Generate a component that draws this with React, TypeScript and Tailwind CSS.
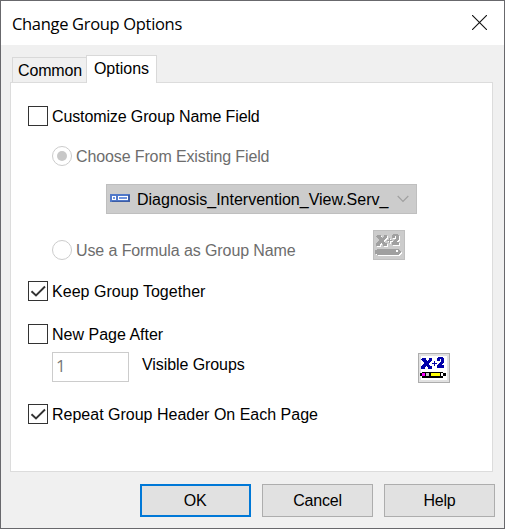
import type { ReactNode } from "react";

function CheckRow({ label, checked, className, textClass }: { label: string; checked?: boolean; className: string; textClass: string }) {
  return (
    <label className={`flex h-5 items-center ${className}`}>
      <span className="flex size-5 shrink-0 items-center justify-center border border-[#333333] bg-white">
        {checked && (
          <svg width="18" height="18" viewBox="0 0 18 18" fill="none" stroke="#333" strokeWidth="1.9">
            <path d="M2.5 9.2 7 13.5 16 4.5" />
          </svg>
        )}
      </span>
      <span className={`ml-1 pt-0.5 whitespace-nowrap ${textClass}`}>{label}</span>
    </label>
  );
}

function RadioRow({ label, selected, textClass }: { label: string; selected?: boolean; textClass: string }) {
  return (
    <label className="flex h-5 items-center text-[#6d6d6d]">
      <span className="flex size-5 shrink-0 items-center justify-center rounded-full border border-[#cccccc]">
        {selected && <span className="size-2.5 rounded-full bg-[#c8c8c8]" />}
      </span>
      <span className={`ml-1 pt-0.5 whitespace-nowrap ${textClass}`}>{label}</span>
    </label>
  );
}

function Glyphs() {
  return (
    <>
      <path d="M4 5h4v2h1v1h1v-1h1v-2h3v3h-1v1h-1v1h-1v2h1v1h2v3h-4v-2h-1v-1h-1v1h-1v2h-4v-3h1v-1h1v-1h1v-2h-1v-1h-1v-1h-1z" />
      <path d="M16 8h1v2h2v1h-2v2h-1v-2h-2v-1h2z" />
      <path d="M20 4h5v1h1v5h-1v1h-1v1h2v3h-7v-3h1v-1h1v-1h1v-1h1v-3h-1v2h-3v-3h1z" />
    </>
  );
}

function FormulaIcon({ disabled }: { disabled?: boolean }) {
  if (disabled) {
    const pencil = "M4 19h22v1h1v1h1v2h-1v1h-1v1h-22v-1h-2v-4h2z";
    return (
      <svg width="30" height="28" viewBox="1 1 30 28" shapeRendering="crispEdges">
        <g fill="#fff" transform="translate(1 1)"><Glyphs /><path d={pencil} /></g>
        <g fill="#a0a0a0"><Glyphs /><path d={pencil} /></g>
        <path d="M23 20h2v2h-2z" fill="#fff" />
      </svg>
    );
  }
  return (
    <svg width="30" height="28" viewBox="1 1 30 28" shapeRendering="crispEdges">
      <path d="M3 3h26v24h-26z" fill="#fff" />
      <g fill="#0000aa"><Glyphs /></g>
      <path d="M4 19h21v1h3v3h-3v2h-21v-2h-2v-3h2z" fill="#000" />
      <path d="M4 20h3v3h-3z" fill="#ff00ff" />
      <path d="M8 20h3v3h-3z" fill="#c8c8c8" />
      <path d="M13 20h9v3h-9z" fill="#ffff00" />
      <path d="M23 20h2v3h-2z" fill="#fff" />
    </svg>
  );
}

function DialogButton({ children, primary }: { children: ReactNode; primary?: boolean }) {
  return (
    <button className={`flex h-[33px] w-[111px] items-center justify-center bg-[#e1e1e1] tracking-[-0.2px] ${primary ? "border-2 border-[#0078d7] pr-px" : "border border-[#adadad]"}`}>
      {children}
    </button>
  );
}

export default function App() {
  return (
    <div className="flex h-[529px] w-[505px] flex-col overflow-hidden border border-[#68686c] bg-[#f0f0f0] font-['Liberation_Sans',Arial,sans-serif] text-[16px] leading-5 text-black">
      <header className="flex h-11 shrink-0 items-center justify-between bg-white pr-[17px] pl-[11px]">
        <h1 className="pt-0.5 font-['Open_Sans','Noto_Sans',sans-serif] text-[16.5px] tracking-[-0.32px]">Change Group Options</h1>
        <svg width="15" height="15" viewBox="0 0 15 15" fill="none" stroke="#111" strokeWidth="1.1" className="mb-px">
          <path d="M0 0 15 15M15 0 0 15" />
        </svg>
      </header>
      <nav className="z-10 mt-[10px] -mb-px flex h-7 shrink-0 items-end pl-[11px]">
        <div className="mb-px flex h-[25px] w-[74px] items-center justify-center border border-r-0 border-b-0 border-[#d9d9d9] pt-0.5 pl-px">
          <span className="whitespace-nowrap tracking-[-0.15px]">Common</span>
        </div>
        <div className="flex h-7 w-[71px] items-center justify-center border border-b-0 border-[#d9d9d9] bg-white pb-px">Options</div>
      </nav>
      <main className="ml-[9px] h-[390px] w-[483px] shrink-0 border border-[#dcdcdc] bg-white pt-[23px] pl-[17px]">
        <CheckRow label="Customize Group Name Field" className="" textClass="tracking-[-0.12px]" />
        <div className="mt-5 ml-6">
          <RadioRow label="Choose From Existing Field" selected textClass="tracking-[-0.12px]" />
          <div className="mt-[18px] ml-[54px] flex h-[30px] w-[311px] items-center border border-[#bfbfbf] bg-[#cccccc] pl-[3px]">
            <svg width="20" height="8" viewBox="0 0 20 8" className="mb-0.5" shapeRendering="crispEdges">
              <path d="M0 0h20v8h-20z" fill="#5078c8" />
              <path d="M18 1h2v7h-18v-1h16z" fill="#3c5ca4" />
              <path d="M2 2h4v4h-4zM8 2h10v4h-10z" fill="#fff" />
              <path d="M3 3h2v2h-2zM9 3h8v2h-8z" fill="#6f94df" />
            </svg>
            <span className="ml-[7px] pt-0.5 whitespace-nowrap">Diagnosis_Intervention_View.Serv_</span>
            <svg className="ml-auto mr-[7px]" width="12" height="8" viewBox="0 0 12 8" fill="none" stroke="#a0a0a0" strokeWidth="1.2">
              <path d="M.7 1 6 6.3 11.3 1" />
            </svg>
          </div>
          <div className="mt-4 flex h-[30px] w-[353px] items-start justify-between">
            <div className="pt-[10px]">
              <RadioRow label="Use a Formula as Group Name" textClass="tracking-[-0.1px]" />
            </div>
            <button disabled className="h-[30px] w-8 border border-[#bfbfbf] bg-[#cccccc]"><FormulaIcon disabled /></button>
          </div>
        </div>
        <CheckRow label="Keep Group Together" checked className="mt-[21px]" textClass="tracking-[0.04px]" />
        <CheckRow label="New Page After" className="mt-[23px]" textClass="" />
        <div className="mt-2 ml-6 flex h-[31px] items-start">
          <div className="flex h-[30px] w-[77px] items-center border border-[#cccccc] pb-0.5 pl-[3px] font-['Open_Sans',sans-serif] text-[17px] text-[#777777]">1</div>
          <span className="mt-[3px] ml-[13px] tracking-[-0.08px] whitespace-nowrap">Visible Groups</span>
          <button className="mt-px mr-[42px] ml-auto h-[30px] w-8 border border-[#adadad] bg-[#e1e1e1]"><FormulaIcon /></button>
        </div>
        <CheckRow label="Repeat Group Header On Each Page" checked className="mt-[21px]" textClass="" />
      </main>
      <footer className="mt-3 flex justify-end gap-[11px] pr-[9px]">
        <DialogButton primary>OK</DialogButton>
        <DialogButton>Cancel</DialogButton>
        <DialogButton>Help</DialogButton>
      </footer>
    </div>
  );
}
